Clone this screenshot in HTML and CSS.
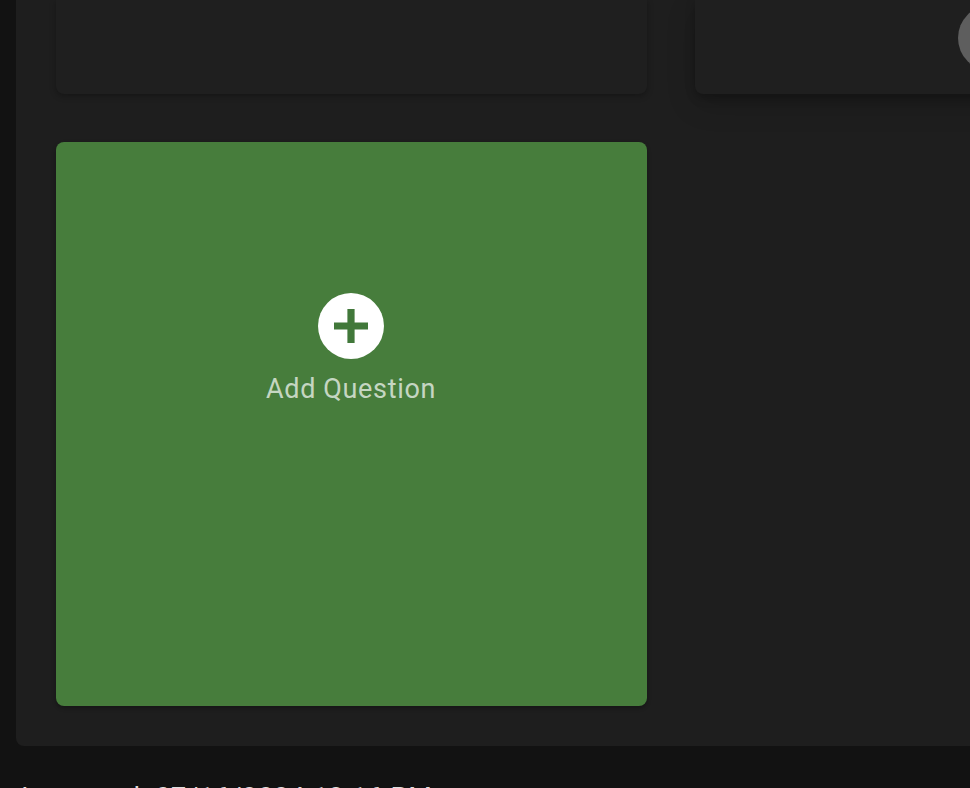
FILE: index.html
```html
<!DOCTYPE html>
<html lang="en">
<head>
<meta charset="utf-8">
<title>Add Question</title>
<link rel="stylesheet" href="styles.css">
</head>
<body>
<main class="panel">
  <section class="grid">
    <article class="card card-left"></article>
    <article class="card card-right"><span class="avatar"></span></article>
    <button class="add-card" type="button">
      <svg class="add-icon" viewBox="0 0 66 66" aria-hidden="true">
        <circle cx="33" cy="33" r="33" fill="#fff"/>
        <path fill="#41783a" d="M29.4 16h7.2v13.4H50v7.2H36.6V50h-7.2V36.6H16v-7.2h13.4z"/>
      </svg>
      <span class="add-label">Add Question</span>
    </button>
  </section>
</main>
<p class="footer">Answered: 07/16/2024 12:16 PM</p>
</body>
</html>
```
FILE: styles.css
```css
html, body {
  margin: 0;
  height: 788px;
  overflow: hidden;
  background: #121212;
  font-family: Roboto, "Liberation Sans", sans-serif;
}
.panel {
  width: 1200px;
  height: 746px;
  margin-left: 16px;
  padding: 0 40px;
  box-sizing: border-box;
  background: #1e1e1e;
  border-radius: 0 0 8px 8px;
}
.grid {
  display: grid;
  grid-template-columns: 591px 591px;
  grid-template-rows: 94px 564px;
  column-gap: 48px;
  row-gap: 48px;
}
.card {
  background: #1f1f1f;
  border-radius: 0 0 8px 8px;
}
.card-left {
  box-shadow: 0 2px 6px rgba(0, 0, 0, .3);
}
.card-right {
  position: relative;
  overflow: hidden;
  box-shadow: 0 4px 10px rgba(0, 0, 0, .25), 0 10px 30px rgba(0, 0, 0, .16);
}
.avatar {
  position: absolute;
  left: 263px;
  top: 5px;
  width: 66px;
  height: 66px;
  border-radius: 50%;
  background: #5e5e5e;
}
.add-card {
  display: flex;
  flex-direction: column;
  align-items: center;
  justify-content: flex-start;
  padding: 151px 1px 0 0;
  border: 0;
  border-radius: 8px;
  background: #477d3c;
  box-shadow: 0 2px 4px rgba(0, 0, 0, .3);
  font-family: inherit;
}
.add-icon {
  display: block;
  width: 66px;
  height: 66px;
}
.add-label {
  margin-top: 12px;
  font-size: 27px;
  line-height: 36px;
  letter-spacing: .65px;
  color: rgba(255, 255, 255, .7);
}
.footer {
  margin: 34px 0 0 16px;
  font-size: 27px;
  line-height: 36px;
  letter-spacing: .65px;
  color: #ddd;
  white-space: nowrap;
}
```
